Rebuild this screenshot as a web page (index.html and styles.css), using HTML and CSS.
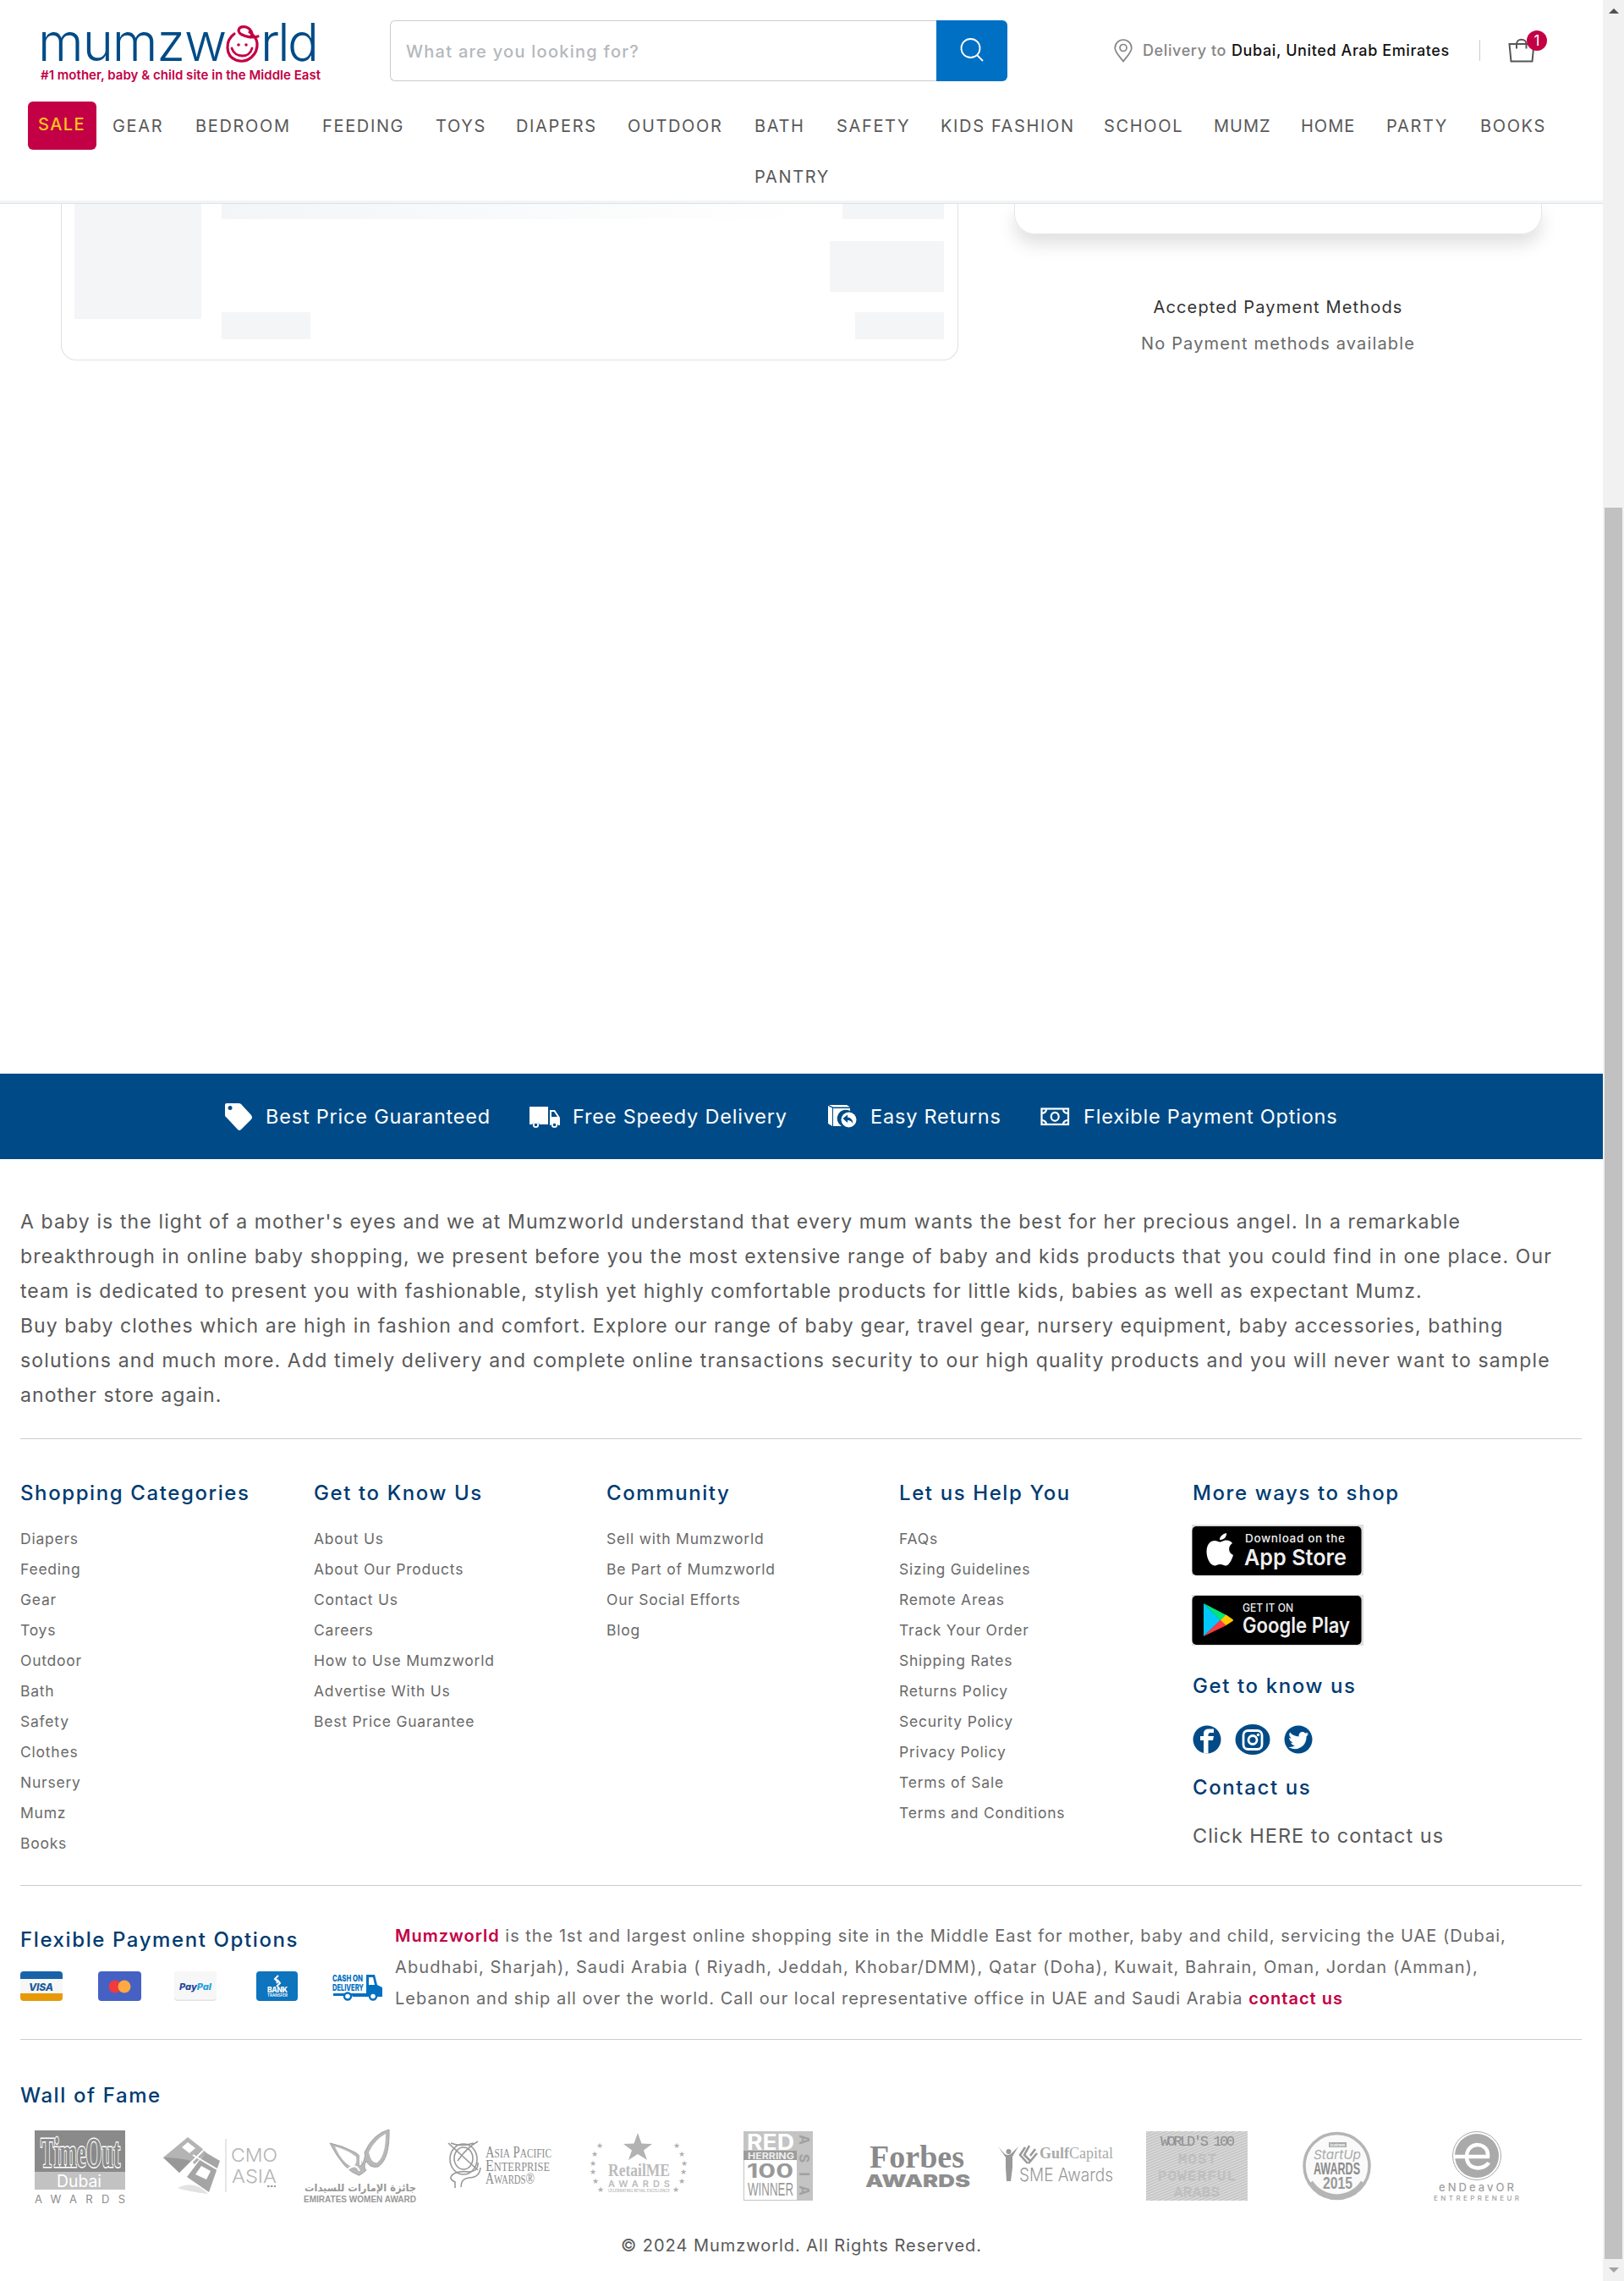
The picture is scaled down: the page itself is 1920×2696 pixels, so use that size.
FILE: index.html
```html
<!DOCTYPE html>
<html lang="en">
<head>
<meta charset="utf-8">
<title>Mumzworld - Cart</title>
<link rel="stylesheet" href="styles.css">
</head>
<body>
<div class="page">
  <header class="header">
    <div class="topbar">
      <svg class="logo" width="340" height="84" viewBox="0 0 340 84">
        <g class="logo-word"><text x="-3" y="58" textLength="223">mumzw</text><text x="260" y="58" textLength="69">rld</text></g>
        <g fill="none" stroke="#c30045" stroke-width="3.2" stroke-linecap="round">
          <path d="M229 26C218 34 218 52 231 57C245 62 257 50 256 37C255 31 252 27 247 24"/>
          <path d="M257 29C247 32 234 27 234 22C235 16 245 16 249 23C251 27 249 29 248 30"/>
          <path d="M226 43C230 55 247 55 250 43" stroke-width="2.8"/>
        </g>
        <circle cx="234" cy="39" r="1.8" fill="#c30045"/><circle cx="243" cy="39" r="1.8" fill="#c30045"/>
        <text class="logo-tag" x="0" y="80" textLength="331">#1 mother, baby &amp; child site in the Middle East</text>
      </svg>
      <div class="search">
        <div class="search-field">What are you looking for?</div>
        <div class="search-button">
          <svg width="32" height="32" viewBox="0 0 32 32" fill="none" stroke="#fff" stroke-width="1.8"><circle cx="14.5" cy="14" r="11"/><path d="M22 22l7 7"/></svg>
        </div>
      </div>
      <div class="delivery">
        <svg width="22" height="28" viewBox="0 0 22 28" fill="none" stroke="#858585" stroke-width="1.7"><path d="M11 26.5C7 21 1.2 16 1.2 10.800A9.800 9.800 0 0 1 20.800 10.800C20.800 16 15 21 11 26.500Z"/><circle cx="11" cy="10.500" r="4"/></svg>
        <span class="to">Delivery to</span> <span class="place">Dubai, United Arab Emirates</span>
      </div>
      <div class="bag">
        <svg width="32" height="32" viewBox="0 0 32 32" fill="none" stroke="#555" stroke-width="2"><path d="M1.500 9H30.500L28.500 29.500H3.500Z"/><path d="M10 14.500V9C10 2 21.500 2 21.500 9V14.500"/></svg>
        <span class="badge">1</span>
      </div>
    </div>
    <nav class="nav">
      <a class="sale">SALE</a><a>GEAR</a><a>BEDROOM</a><a>FEEDING</a><a>TOYS</a><a>DIAPERS</a><a>OUTDOOR</a><a>BATH</a><a>SAFETY</a><a>KIDS FASHION</a><a>SCHOOL</a><a class="tight">MUMZ</a><a class="tight">HOME</a><a>PARTY</a><a>BOOKS</a>
      <a class="last">PANTRY</a>
    </nav>
  </header>

  <main class="cart">
    <section class="item">
      <div class="bone photo"></div>
      <div class="lines"><div class="bone title"></div><div class="bone qty"></div></div>
      <div class="prices"><div class="bone p1"></div><div class="bone p2"></div><div class="bone p3"></div></div>
    </section>
    <aside class="side">
      <div class="summary"></div>
      <p class="accepted">Accepted Payment Methods</p>
      <p class="none">No Payment methods available</p>
    </aside>
  </main>

  <section class="perks">
    <div class="perk"><svg width="48" height="34" viewBox="0 0 48 34"><path fill="#fff" fill-rule="evenodd" d="M2 1H16Q18 1 19 2L31 15Q33 18 31 20L19 32Q17 34 15 32L2 18Q0 17 0 15V3Q0 1 2 1ZM6 4a2.500 2.500 0 1 0 .1 0Z"/></svg>Best Price Guaranteed</div>
    <div class="perk"><svg width="51" height="28" viewBox="0 0 51 28"><path fill="#fff" fill-rule="evenodd" d="M0 2H22V23H12A5 5 0 0 0 3 23H0ZM24 6H30L36 15V24H34A5 5 0 0 0 25 24H24ZM26 8V14H33L29 8Z"/><circle cx="7.500" cy="23.500" r="2.700" fill="none" stroke="#fff" stroke-width="1.800"/><circle cx="29.500" cy="23.500" r="2.700" fill="none" stroke="#fff" stroke-width="1.800"/></svg>Free Speedy Delivery</div>
    <div class="perk"><svg width="50" height="28" viewBox="0 0 50 28"><path fill="#fff" d="M0 1L5 3.500V25L0 22ZM1 0H22L26 2.500H6ZM6 4H26V7A10 10 0 0 0 16 25H6Z"/><circle cx="24.500" cy="17.500" r="9" fill="#fff"/><path fill="#004b87" d="M17.500 16L23 11.500V14.500Q29 15 29.500 22Q27 18 23 18V21Z"/></svg>Easy Returns</div>
    <div class="perk"><svg width="51" height="24" viewBox="0 0 51 24" fill="none" stroke="#fff" stroke-width="2.200"><rect x="1.500" y="2.500" width="31.500" height="18.500"/><ellipse cx="17.200" cy="11.800" rx="4.500" ry="5"/><path d="M2 8Q7 7 7 3M2 16Q7 17 7 21M32 8Q27 7 27 3M32 16Q27 17 27 21"/></svg>Flexible Payment Options</div>
  </section>

  <footer class="footer">
    <div class="about">
      <span>A baby is the light of a mother's eyes and we at Mumzworld understand that every mum wants the best for her precious angel. In a remarkable</span>
      <span class="wide">breakthrough in online baby shopping, we present before you the most extensive range of baby and kids products that you could find in one place. Our</span>
      <span class="narrow">team is dedicated to present you with fashionable, stylish yet highly comfortable products for little kids, babies as well as expectant Mumz.</span>
      <span class="narrow">Buy baby clothes which are high in fashion and comfort. Explore our range of baby gear, travel gear, nursery equipment, baby accessories, bathing</span>
      <span class="wide">solutions and much more. Add timely delivery and complete online transactions security to our high quality products and you will never want to sample</span>
      <span class="narrow">another store again.</span>
    </div>

    <div class="columns">
      <div><h3>Shopping Categories</h3>
        <ul><li>Diapers</li><li>Feeding</li><li>Gear</li><li>Toys</li><li>Outdoor</li><li>Bath</li><li>Safety</li><li>Clothes</li><li>Nursery</li><li>Mumz</li><li>Books</li></ul></div>
      <div><h3>Get to Know Us</h3>
        <ul><li>About Us</li><li>About Our Products</li><li>Contact Us</li><li>Careers</li><li>How to Use Mumzworld</li><li>Advertise With Us</li><li>Best Price Guarantee</li></ul></div>
      <div><h3>Community</h3>
        <ul><li>Sell with Mumzworld</li><li>Be Part of Mumzworld</li><li>Our Social Efforts</li><li>Blog</li></ul></div>
      <div><h3>Let us Help You</h3>
        <ul><li>FAQs</li><li>Sizing Guidelines</li><li>Remote Areas</li><li>Track Your Order</li><li>Shipping Rates</li><li>Returns Policy</li><li>Security Policy</li><li>Privacy Policy</li><li>Terms of Sale</li><li>Terms and Conditions</li></ul></div>
      <div class="more"><h3>More ways to shop</h3>
        <svg class="store" width="203" height="60" viewBox="0 0 203 60">
          <rect width="203" height="60" fill="#dedede"/><rect x="0.500" y="2" width="200" height="58" rx="5"/>
          <path fill="#fff" d="M33 20.500C36 20.500 37 18.500 41 18.500C44 18.500 46.500 20 48 22C42.500 25.500 43 33.500 49 36C48 39 45 48 40.500 48.500C37.500 48.500 37 47 33.500 47C30 47 29.500 48.500 27 48.500C22 48.500 17.500 40 17.500 32C17.500 23 22 19 27 19C30 19 31.500 20.500 33 20.500ZM33 18C33 14 36.500 11 41 10C41.500 14 38 18.500 33 18Z"/>
          <g fill="#eee" font-weight="500"><text x="63" y="21" font-size="13.500" textLength="118">Download on the</text><text x="62" y="48" font-size="26" font-weight="600" textLength="121" lengthAdjust="spacingAndGlyphs">App Store</text></g>
        </svg>
        <svg class="store" width="203" height="60" viewBox="0 0 203 60">
          <rect width="203" height="60" fill="#dedede"/><rect x="0.500" y="1" width="200" height="58" rx="5"/>
          <path fill="#00c8ff" d="M14 10L34 30L14 49Z"/><path fill="#00e676" d="M14 10L41 24L34 30.500Z"/><path fill="#ff3a44" d="M14 49L34 29.500L41 36Z"/><path fill="#ffc800" d="M40.500 23.500L48.500 29Q49.500 30 48.500 31L40.500 36L34 30Z"/>
          <g fill="#eee" font-weight="500"><text x="60" y="20" font-size="13" textLength="60" lengthAdjust="spacingAndGlyphs">GET IT ON</text><text x="60" y="45" font-size="25" font-weight="600" textLength="127" lengthAdjust="spacingAndGlyphs">Google Play</text></g>
        </svg>
        <h3 class="know">Get to know us</h3>
        <div class="social">
          <svg width="34" height="34" viewBox="0 0 34 34"><circle cx="17" cy="17" r="16.500" fill="#004b87"/><path fill="#fff" d="M13 33.500V18H9V13H13V10Q13 4.500 19 4.500H25V9H21Q18.500 9 18.500 11.500V13H25L24 18H18.500V33.500Z"/></svg>
          <svg width="42" height="38" viewBox="0 0 42 38"><ellipse cx="21" cy="19" rx="20.500" ry="18" fill="#004b87"/><g fill="none" stroke="#fff" stroke-width="2.800"><rect x="10" y="8.500" width="22" height="22" rx="5.500"/><circle cx="21" cy="19.500" r="5"/></g><circle cx="27.500" cy="13.500" r="1.700" fill="#fff"/></svg>
          <svg width="34" height="34" viewBox="0 0 34 34"><circle cx="17" cy="17" r="16.500" fill="#004b87"/><path fill="#fff" d="M29 10Q27.500 11 26.500 11Q28 10 28.500 8.500Q27 9.500 25 9.500C22 6.500 17 8.500 17.500 13.500Q11 13 7 8.500Q5 12.500 8.500 15.500Q7 15.500 6 15Q6.500 19 10.500 20.500Q9 21 8 20.500Q9.500 24 13 24Q10 26.500 5.500 26C16 32 27 24.500 26.500 13.500Q28 12 29 10Z"/></svg>
        </div>
        <h3>Contact us</h3>
        <p class="click">Click HERE to contact us</p>
      </div>
    </div>

    <div class="pay">
      <div class="methods"><h3>Flexible Payment Options</h3>
        <svg width="430" height="36" viewBox="0 0 430 36">
          <clipPath id="v"><rect width="50" height="35" rx="4"/></clipPath>
          <g clip-path="url(#v)"><rect width="50" height="35" fill="#f7f7f7"/><rect width="50" height="9" fill="#1a63a8"/><rect y="26" width="50" height="9" fill="#e79a08"/></g>
          <text x="10" y="22.500" font-size="12" font-weight="800" font-style="italic" fill="#1a5a9c" textLength="29">VISA</text>
          <rect x="92" width="51" height="35" rx="4" fill="#4661c4"/><circle cx="112" cy="18" r="7.500" fill="#f03a3e"/><circle cx="123" cy="18" r="7.500" fill="#ffa940"/>
          <rect x="182" width="50" height="35" rx="4" fill="#e3e3e3"/><rect x="182" width="50" height="33.500" rx="4" fill="#f7f7f7"/>
          <text x="188" y="22" font-size="11" font-weight="800" font-style="italic" fill="#22489a" textLength="38" lengthAdjust="spacingAndGlyphs">Pay<tspan fill="#1fa0e0">Pal</tspan></text>
          <rect x="279" width="49" height="35" rx="4" fill="#0d74bd"/><path d="M305 5L301 9L305 13M301 9Q306 11 303 14M303 18L307 14L304 10" fill="none" stroke="#fff" stroke-width="2"/>
          <text x="292" y="25" font-size="8.500" font-weight="800" fill="#fff" textLength="24">BANK</text><text x="292" y="30" font-size="5" font-weight="600" fill="#fff" textLength="24" lengthAdjust="spacingAndGlyphs">TRANSFER</text>
          <g fill="#0070c0" font-weight="800" font-size="10.500"><text x="369" y="12" textLength="36" lengthAdjust="spacingAndGlyphs">CASH ON</text><text x="369" y="22.500" textLength="37" lengthAdjust="spacingAndGlyphs">DELIVERY</text></g>
          <path fill="#0070c0" fill-rule="evenodd" d="M409 4H419L422 16L428 19V30H422A6 6 0 0 0 412 30H393A6 6 0 0 0 383 29H370V26H409ZM412 7V16H419L417 7Z"/>
          <circle cx="387" cy="29.500" r="4" fill="#fff" stroke="#0070c0" stroke-width="2.400"/><circle cx="417" cy="29.500" r="4" fill="#fff" stroke="#0070c0" stroke-width="2.400"/>
        </svg>
      </div>
      <div class="blurb">
        <span><b>Mumzworld</b> is the 1st and largest online shopping site in the Middle East for mother, baby and child, servicing the UAE (Dubai,</span>
        <span class="wide">Abudhabi, Sharjah), Saudi Arabia ( Riyadh, Jeddah, Khobar/DMM), Qatar (Doha), Kuwait, Bahrain, Oman, Jordan (Amman),</span>
        <span>Lebanon and ship all over the world. Call our local representative office in UAE and Saudi Arabia <b>contact us</b></span>
      </div>
    </div>

    <div class="fame"><h3>Wall of Fame</h3></div>
    <div class="awards">
      <svg viewBox="0 0 140 90"><rect x="16" y="2" width="107" height="50" fill="#8a8a8a"/><rect x="16" y="51" width="107" height="21" fill="#c2c2c2"/>
        <text x="23" y="45" class="serif" font-size="50" font-weight="700" fill="#8a8a8a" stroke="#fff" stroke-width="3" paint-order="stroke" textLength="94" lengthAdjust="spacingAndGlyphs">TimeOut</text>
        <text x="42" y="69" font-size="20" fill="#fff" textLength="53" lengthAdjust="spacingAndGlyphs">Dubai</text><text x="16" y="88" font-size="13" fill="#8c8c8c" textLength="107">AWARDS</text></svg>
      <svg viewBox="0 0 140 90"><path fill="#b4b4b4" d="M3 34L32 10L50 24L22 52Z"/><path fill="#989898" d="M3 34Q20 34 36 38L22 52Z"/><path fill="#b0b0b0" d="M48 24L54 28L40 42L35 37Z"/><path fill="#a5a5a5" d="M31 57L53 28L70 38L57 75Z"/><path d="M38 31L70 50M22 54L50 26" stroke="#fff" stroke-width="2"/><path fill="#fff" d="M25 22L32 16L41 23L34 29ZM41 54L48 44L59 50L54 60Z"/><path fill="#e2e2e2" d="M20 70Q40 60 56 77Q30 74 20 70Z"/><path d="M77 12V75" stroke="#ccc"/>
        <g font-size="22" font-weight="300" fill="#b4b4b4"><text x="83" y="39" textLength="55" lengthAdjust="spacingAndGlyphs">CMO</text><text x="84" y="64" textLength="53" lengthAdjust="spacingAndGlyphs">ASIA</text></g><path d="M126 68h10" stroke="#999" stroke-width="2" stroke-dasharray="2.500 1.500"/></svg>
      <svg viewBox="0 0 140 90"><path fill="#b8b8b8" stroke="#a2a2a2" d="M35 17Q50 20 65 28Q73 32 72 44Q78 34 76 28Q86 6 105 1Q106 36 92 45Q82 47 78 38Q74 46 78 49Q70 56 69 55Q52 50 35 17Z"/><path fill="#fff" d="M41 21Q56 25 66 33Q68 44 60 45Q48 38 41 21ZM81 28Q88 13 101 6Q101 32 91 40Q84 42 81 28Z"/><path d="M56 48Q66 40 70 50M71 31V43" stroke="#fff" stroke-width="2" fill="none"/>
        <text x="137" y="74" class="arabic" font-size="12" font-weight="700" fill="#999" direction="rtl" textLength="132" lengthAdjust="spacingAndGlyphs">جائزة الإمارات للسيدات</text><text x="4" y="87" class="sans" font-size="11" font-weight="700" fill="#999" textLength="133" lengthAdjust="spacingAndGlyphs">EMIRATES WOMEN AWARD</text></svg>
      <svg viewBox="0 0 140 90"><g fill="none" stroke="#999" stroke-width="1.600"><ellipse cx="28" cy="36" rx="16" ry="18"/><ellipse cx="28" cy="35" rx="11" ry="13"/><path d="M10 17L45 49M45 15Q32 22 21 38M13 17Q25 22 40 17M45 40Q46 50 35 51Q17 49 13 57Q12 60 18 63Q18 66 18 70M48 46Q47 58 34 58Q25 59 25 69" /></g>
        <g class="serif" font-size="18" fill="#8c8c8c"><text x="54" y="34" textLength="78" lengthAdjust="spacingAndGlyphs">A<tspan font-size="14">SIA</tspan> P<tspan font-size="14">ACIFIC</tspan></text><text x="54" y="50" textLength="76" lengthAdjust="spacingAndGlyphs">E<tspan font-size="14">NTERPRISE</tspan></text><text x="54" y="65" textLength="58" lengthAdjust="spacingAndGlyphs">A<tspan font-size="14">WARDS</tspan>®</text></g></svg>
      <svg viewBox="0 0 140 90"><path fill="#b2b2b2" d="M69 5L73.500 17.500L86 18L76 25.500L80 37L69 30L58 37L62 25.500L52 18L64.500 17.500Z"/><g font-size="9" fill="#b0b0b0" class="sym"><text x="20" y="23">★</text><text x="14" y="33">★</text><text x="12" y="44">★</text><text x="12" y="54">★</text><text x="15" y="65">★</text><text x="21" y="75">★</text><text x="111" y="23">★</text><text x="117" y="33">★</text><text x="120" y="44">★</text><text x="119" y="54">★</text><text x="117" y="65">★</text><text x="110" y="75">★</text></g>
        <text x="34" y="56" class="serif" font-size="20" font-weight="700" fill="#bcbcbc" textLength="73" lengthAdjust="spacingAndGlyphs">RetailME</text><text x="34" y="69" font-size="11" font-weight="600" fill="#bcbcbc" textLength="73">AWARDS</text><text x="34" y="75" font-size="5" font-weight="600" fill="#bbb" textLength="73" lengthAdjust="spacingAndGlyphs">CELEBRATING RETAIL EXCELLENCE</text></svg>
      <svg viewBox="0 0 140 90"><rect x="29.500" y="3.500" width="81" height="81" fill="#fff" stroke="#c4c4c4"/><rect x="29" y="3" width="63" height="24" fill="#c4c4c4"/><rect x="92" y="3" width="19" height="82" fill="#c4c4c4"/><rect x="29" y="26" width="63" height="11" fill="#9c9c9c"/>
        <g font-weight="700"><text x="33" y="25" font-size="25" fill="#fff" textLength="56" lengthAdjust="spacingAndGlyphs">RED</text><text x="34" y="35.500" font-size="11" fill="#eee" textLength="55" lengthAdjust="spacingAndGlyphs">HERRING</text><text x="33" y="58" font-size="23" fill="#999" textLength="55" lengthAdjust="spacingAndGlyphs">100</text><text x="34" y="79" class="sans" font-size="22" font-weight="400" fill="#999" textLength="54" lengthAdjust="spacingAndGlyphs">WINNER</text><text transform="translate(95 7) rotate(90)" font-size="16" fill="#a0a0a0" textLength="72">ASIA</text></g></svg>
      <svg viewBox="0 0 140 90"><text x="13" y="46" class="serif" font-size="38" font-weight="700" fill="#8a8a8a" textLength="112" lengthAdjust="spacingAndGlyphs">Forbes</text><text x="8" y="69" font-size="20.500" font-weight="900" fill="#8e8e8e" textLength="124" lengthAdjust="spacingAndGlyphs">AWARDS</text></svg>
      <svg viewBox="0 0 140 90"><path fill="#999" d="M0 21L7 29Q9 31 11 31Q14 31 16 29L24 21L17 33V46L15 62H10L9 46V34Z"/><circle cx="12.500" cy="27" r="3" fill="#999"/><path d="M32 22L26 31L35 41M37 20L31 31L38 38M44 24L38 32M46 29L36 41" stroke="#999" stroke-width="2.600" fill="none"/>
        <text x="49" y="35" class="serif" font-size="19" fill="#aaa" textLength="87" lengthAdjust="spacingAndGlyphs"><tspan font-weight="700">Gulf</tspan>Capital</text><text x="25" y="62" font-size="22" font-weight="300" fill="#999" textLength="111" lengthAdjust="spacingAndGlyphs">SME Awards</text></svg>
      <svg viewBox="0 0 140 90"><defs><pattern id="h" width="5" height="3" patternUnits="userSpaceOnUse" patternTransform="rotate(-22)"><rect width="5" height="3" fill="#dedede"/><rect width="5" height="1.500" fill="#c0c0c0"/></pattern></defs><rect x="10" y="3" width="120" height="82" fill="url(#h)"/>
        <g class="mono" font-size="17"><text x="27" y="20" fill="#8f8f8f" textLength="88">WORLD'S 100</text><g fill="#c4c4c4" stroke="#b8b8b8" stroke-width=".5"><text x="48" y="41" textLength="45">MOST</text><text x="24" y="61" textLength="92">POWERFUL</text><text x="43" y="80" textLength="54">ARABS</text></g></g></svg>
      <svg viewBox="0 0 140 90"><circle cx="70.500" cy="44" r="38.500" fill="#fafafa" stroke="#b5b5b5" stroke-width="3.500"/><path d="M40 63A36 36 0 0 0 101 63" fill="none" stroke="#b5b5b5" stroke-width="5"/><rect x="61" y="16" width="21" height="6" fill="#aaa"/><text x="62.500" y="21" font-size="5" fill="#fff" textLength="18">business</text>
        <text x="43" y="36" font-size="15" font-style="italic" fill="#aaa" textLength="56" lengthAdjust="spacingAndGlyphs">StartUp</text><text x="43" y="54" class="sans" font-size="20" font-weight="700" fill="#8c8c8c" textLength="55" lengthAdjust="spacingAndGlyphs">AWARDS</text><text x="54" y="71" class="sans" font-size="20" font-weight="700" fill="#999" textLength="35" lengthAdjust="spacingAndGlyphs">2015</text></svg>
      <svg viewBox="0 0 140 90"><circle cx="71" cy="32" r="28.500" fill="#fff" stroke="#aaa"/><circle cx="71" cy="32" r="26" fill="#aaa"/><path d="M44 33H84C86 15 59 14 59 33C59 50 80 49 85 40" fill="none" stroke="#fff" stroke-width="4.500"/>
        <text x="26" y="73.500" font-size="13" font-weight="500" fill="#a2a2a2" textLength="89">eNDeavOR</text><text x="20" y="84.500" font-size="8" font-weight="500" fill="#a2a2a2" textLength="101">ENTREPRENEUR</text></svg>
    </div>
    <p class="copy">© 2024 Mumzworld. All Rights Reserved.</p>
  </footer>
</div>
<div class="scrollbar"><i class="up"></i><i class="thumb"></i><i class="down"></i></div>
</body>
</html>
```
FILE: styles.css
```css
* { box-sizing: border-box; }
body { margin: 0; display: flex; width: 1920px; height: 2696px; overflow: hidden; background: #fff; font-family: Inter, "Liberation Sans", sans-serif; color: #595959; }
h3, p, ul { margin: 0; padding: 0; font-weight: 400; list-style: none; }
svg { display: block; flex: none; overflow: visible; letter-spacing: 0; }
.serif { font-family: "Liberation Serif", serif; }
.sans { font-family: "Liberation Sans", sans-serif; }
.mono { font-family: "Liberation Mono", monospace; }
.arabic, .sym { font-family: "DejaVu Sans", sans-serif; }
.page { width: 1895px; flex: none; }

/* header */
.header { height: 241px; border-bottom: 1px solid #dbe3e8; box-shadow: inset 0 -3px #f3f4f5; }
.topbar { display: flex; height: 120px; padding: 14px 0 0 48px; }
.logo { margin-right: 73px; }
.logo-word { font-size: 61.500px; font-weight: 300; fill: #004b87; }
.logo-tag { font-size: 15px; font-weight: 600; fill: #c30045; }
.search { display: flex; width: 730px; height: 72px; margin-top: 10px; }
.search-field { flex: 1; border: 1px solid #ccc; border-right: 0; border-radius: 6px 0 0 6px; padding-left: 18px; font-size: 20px; font-weight: 500; line-height: 72px; letter-spacing: 1.260px; color: #b5b8bc; }
.search-button { width: 84px; background: #0070c4; border-radius: 0 6px 6px 0; padding: 19px 0 0 26px; }
.delivery { display: flex; align-items: center; width: 433px; height: 25px; margin: 33px 0 0 126px; border-right: 1px solid #ccc; font-size: 18px; font-weight: 500; letter-spacing: .600px; color: #858585; white-space: nowrap; }
.delivery svg { margin-right: 12px; }
.place { color: #111; margin-left: 6px; }
.bag { position: relative; margin: 29px 0 0 33px; }
.badge { position: absolute; left: 22px; top: -7px; width: 24px; height: 24px; border-radius: 50%; background: #c30045; color: #fff; font-size: 17px; line-height: 24px; text-align: center; }
.nav { display: grid; grid-template-columns: 100px 98px 150px 134px 95px 132px 150px 97px 123px 193px 130px 103px 101px 111px 90px; grid-auto-rows: 60px; padding-left: 33px; font-size: 20px; line-height: 57px; letter-spacing: 1.650px; white-space: nowrap; }
.nav a { padding-top: 1px; }
.nav .tight { letter-spacing: 1px; }
.nav .sale { width: 81px; height: 57px; padding: 0 0 0 12px; line-height: 54px; border-radius: 6px; background: #c30045; color: #ffc220; font-weight: 500; letter-spacing: 1.400px; }
.nav .last { grid-column: 1 / -1; justify-self: center; padding: 1px 0 0 0; }

/* cart placeholder and summary */
.cart { display: flex; height: 1028px; }
.item { display: flex; width: 1061px; height: 185px; margin-left: 72px; padding: 0 16px 0 15px; border: 1px solid #dfe1e3; border-top: 0; border-radius: 0 0 18px 18px; }
.bone { background: #f4f5f7; }
.photo { width: 150px; height: 136px; margin-right: 24px; }
.lines { flex: 1; }
.title { width: 695px; height: 18px; margin-bottom: 110px; background: linear-gradient(90deg, #f4f5f6, #f9fafb 50%, #fff); }
.qty { width: 105px; height: 32px; }
.prices { display: flex; flex-direction: column; align-items: flex-end; }
.p1 { width: 120px; height: 18px; }
.p2 { width: 135px; height: 60px; margin: 26px 0 24px; }
.p3 { width: 105px; height: 32px; }
.side { width: 624px; margin-left: 66px; text-align: center; font-size: 20px; letter-spacing: 1.150px; }
.summary { height: 36px; border-radius: 0 0 24px 24px; border: 1px solid #e6e6e6; border-top: 0; box-shadow: 0 12px 20px rgba(0,0,0,.12); clip-path: inset(0 -30px -50px -30px); }
.accepted { margin-top: 65px; line-height: 43px; color: #333; }
.none { line-height: 43px; color: #6a6a6a; }

/* perks bar */
.perks { display: grid; grid-template-columns: 360px 353px 251px auto; align-items: center; height: 101px; padding-left: 266px; background: #004b87; color: #fff; font-size: 23.500px; letter-spacing: .800px; }
.perk { display: flex; align-items: center; white-space: nowrap; }

/* footer */
.footer { padding: 54px 0 0 24px; }
.about { display: flex; flex-direction: column; font-size: 23px; line-height: 41px; letter-spacing: 1.120px; height: 277px; width: 1846px; border-bottom: 1px solid #ccc; white-space: nowrap; }
.about span, .blurb span { width: max-content; }
.about .wide { letter-spacing: 1.158px; }
.about .narrow { letter-spacing: 1.070px; }
h3 { font-size: 24px; font-weight: 500; line-height: 30px; letter-spacing: 1.600px; color: #003b71; }
.columns { display: grid; grid-template-columns: 347px 346px 346px 347px auto; width: 1846px; height: 528px; padding-top: 49px; border-bottom: 1px solid #ccc; }
.columns ul { margin-top: 21px; font-size: 17.500px; line-height: 36px; letter-spacing: .770px; color: #6a6a6a; }
.store { margin: 22px 0 0 -1px; }
.store + .store { margin-top: 23px; }
.know { margin-top: 33px; }
.social { display: flex; align-items: center; height: 38px; margin-top: 29px; gap: 16px; }
.social + h3 { margin-top: 23px; }
.click { margin-top: 27px; font-size: 23.500px; line-height: 30px; letter-spacing: .980px; }
.pay { display: flex; width: 1846px; height: 182px; border-bottom: 1px solid #ccc; }
.methods { width: 443px; padding-top: 49px; }
.methods svg { margin-top: 22px; }
.blurb { display: flex; flex-direction: column; padding-top: 41px; font-size: 20px; line-height: 37px; letter-spacing: 1px; color: #6a6a6a; white-space: nowrap; }
.blurb .wide { letter-spacing: 1.097px; }
.blurb b { font-weight: 600; color: #c30045; }
.fame { padding-top: 51px; height: 105px; }
.awards { display: grid; grid-template-columns: repeat(11, 165px); margin-left: -12px; height: 90px; justify-items: center; }
.awards svg { width: 140px; height: 90px; }
.copy { margin: 36px 0 0 -24px; text-align: center; font-size: 20px; line-height: 24px; letter-spacing: .970px; }

/* page scrollbar */
.scrollbar { display: flex; flex-direction: column; align-items: center; width: 25px; background: #f1f1f1; }
.up { margin-top: 10px; border: 6px solid transparent; border-top: 0; border-bottom-color: #505050; }
.thumb { width: 21px; height: 2070px; margin-top: 584px; background: #c1c1c1; }
.down { margin-top: 10px; border: 6px solid transparent; border-bottom: 0; border-top-color: #a3a3a3; }
```
